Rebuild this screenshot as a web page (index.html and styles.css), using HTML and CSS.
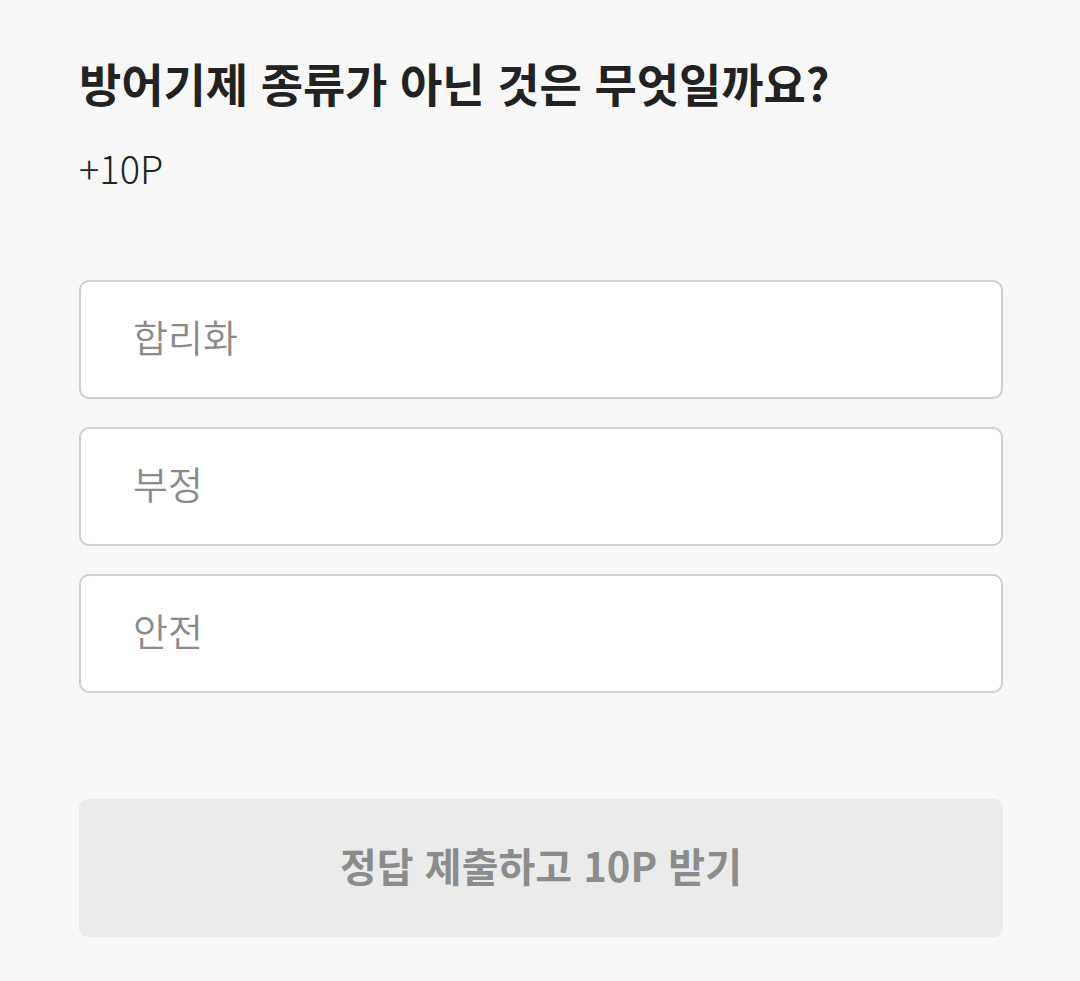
FILE: index.html
```html
<!DOCTYPE html>
<html lang="ko">
<head>
<meta charset="utf-8">
<link rel="stylesheet" href="styles.css">
</head>
<body>
<main class="quiz">
  <h1 class="title">방어기제 종류가 아닌 것은 무엇일까요?</h1>
  <p class="point">+10P</p>
  <ul class="options">
    <li class="option">합리화</li>
    <li class="option">부정</li>
    <li class="option">안전</li>
  </ul>
  <button class="submit" type="button">정답 제출하고 10P 받기</button>
</main>
</body>
</html>
```
FILE: styles.css
```css
html, body {
  margin: 0;
  padding: 0;
  background: #f8f8f8;
}
body {
  font-family: "Noto Sans CJK KR", "Noto Sans", sans-serif;
  width: 1080px;
  height: 981px;
  overflow: hidden;
}
.quiz {
  display: flex;
  flex-direction: column;
  padding: 52px 77px 0 79px;
}
.title {
  margin: 0;
  font-size: 46px;
  font-weight: 700;
  color: #222;
  letter-spacing: -0.1px;
  line-height: 60px;
}
.point {
  margin: 32px 0 0;
  font-size: 38px;
  font-weight: 300;
  color: #222;
  line-height: 48px;
  letter-spacing: 0;
}
.options {
  list-style: none;
  margin: 88px 0 0;
  padding: 0;
  display: flex;
  flex-direction: column;
  gap: 28px;
}
.option {
  box-sizing: border-box;
  height: 119px;
  border: 2px solid #cfcfcf;
  border-radius: 10px;
  background: #fff;
  padding: 0 0 8px 52px;
  display: flex;
  align-items: center;
  font-size: 38px;
  color: #8a8a8a;
  font-weight: 350;
}
.submit {
  margin-top: 106px;
  height: 138px;
  border: none;
  border-radius: 9px;
  background: #ebebeb;
  color: #8c8c8c;
  font-family: inherit;
  font-size: 40px;
  font-weight: 700;
  letter-spacing: 0;
  padding: 0 0 6px;
  cursor: default;
}
```
